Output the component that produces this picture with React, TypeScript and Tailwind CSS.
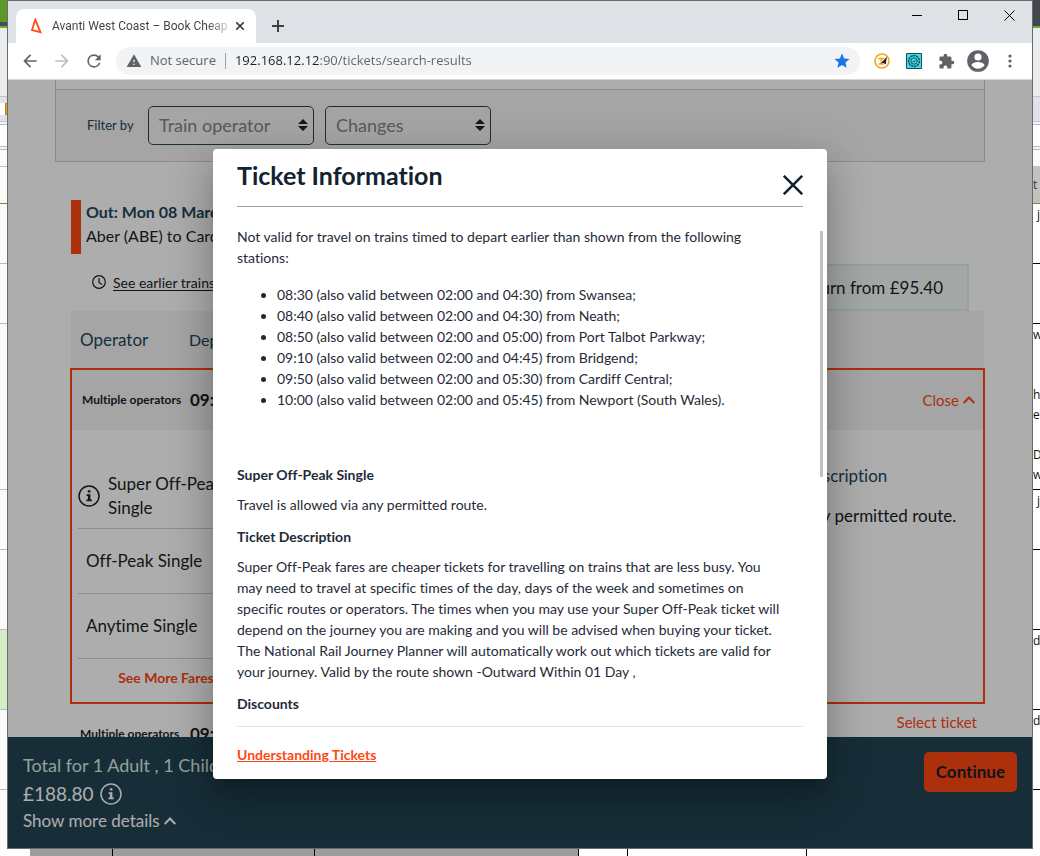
import type { ReactNode } from "react";

type Strip = { size: string; look: string; text?: string };

const leftStrips: Strip[] = [
  { size: "h-[22px]", look: "bg-[#5a9a2b]" },
  { size: "h-[4px]", look: "bg-[#474d55]" },
  { size: "h-[2px]", look: "bg-[#62b32d]" },
  { size: "h-[69px]", look: "bg-[#ebecee] border-b border-[#c3c5cb]" },
  { size: "h-[6px]", look: "bg-[#e0e2e9]" },
  { size: "h-[12px]", look: "bg-[#f0a818] ml-[5px] border border-r-0 border-[#b98014]" },
  { size: "h-[7px]", look: "bg-[#e0e2e9] border-b border-[#c3c5cb]" },
  { size: "h-[3px]", look: "bg-[#f4f4f4] border-b border-[#bcbcbc]" },
  { size: "h-[22px]", look: "bg-white border-b border-[#bcbcbc]" },
  { size: "h-[3px]", look: "bg-[#f4f4f4] border-b border-[#bcbcbc]" },
  { size: "h-[17px]", look: "bg-[#fafafa] border-b border-[#bcbcbc]" },
  { size: "h-[37px]", look: "bg-[#fafafa] border-b border-[#5a9a2b]" },
  { size: "h-[60px]", look: "bg-[#fbfbfb] border-b border-[#bcbcbc]" },
  { size: "h-[60px]", look: "bg-[#fbfbfb] border-b border-[#bcbcbc]" },
  { size: "h-[166px]", look: "bg-[#fbfbfb] border-b border-[#bcbcbc]" },
  { size: "h-[60px]", look: "bg-[#fbfbfb] border-b border-[#bcbcbc]" },
  { size: "h-[80px]", look: "bg-[#fbfbfb] border-b border-[#bcbcbc]" },
  { size: "h-[80px]", look: "bg-[#d6edc4] border-b border-[#bcbcbc]" },
  { size: "h-[80px]", look: "bg-[#fbfbfb] border-b border-[#bcbcbc]" },
  { size: "grow", look: "bg-[#fbfbfb]" },
];

const rightStrips: Strip[] = [
  { size: "h-[26px]", look: "bg-[#41474e]" },
  { size: "h-[2px]", look: "bg-[#62b32d]" },
  { size: "h-[69px]", look: "bg-[#ebecee] border-b border-[#c3c5cb]" },
  { size: "h-[25px]", look: "bg-[#e0e2e9] border-b border-[#c3c5cb]" },
  { size: "h-[3px]", look: "bg-[#f4f4f4] border-b border-[#bcbcbc]" },
  { size: "h-[22px]", look: "bg-white border-b border-[#bcbcbc]" },
  { size: "h-[3px]", look: "bg-[#f4f4f4] border-b border-[#bcbcbc]" },
  { size: "h-[16px]", look: "bg-[#fafafa]" },
  { size: "h-[38px]", look: "bg-[#c2c2c2] border-b border-[#5a9a2b] pt-2 text-[#1b3a4f]", text: "t" },
  { size: "h-[60px]", look: "border-b border-black pl-[4px]", text: "j" },
  { size: "h-[60px]", look: "border-b border-black" },
  { size: "h-[60px]", look: "", text: "w" },
  { size: "h-[20px]", look: "", text: "h" },
  { size: "h-[40px]", look: "", text: "e" },
  { size: "h-[20px]", look: "", text: "D" },
  { size: "h-[26px]", look: "border-b border-black", text: "w" },
  { size: "h-[60px]", look: "border-b border-black pl-[4px]", text: "j" },
  { size: "h-[80px]", look: "border-b border-black" },
  { size: "h-[80px]", look: "border-b border-black", text: "di" },
  { size: "h-[80px]", look: "border-b border-black", text: "di" },
  { size: "grow", look: "" },
];

function EdgeColumn({ strips }: { strips: Strip[] }) {
  return (
    <div className="flex w-[7px] shrink-0 flex-col overflow-hidden bg-white font-['Open_Sans',sans-serif] text-[12px] leading-[22px] text-[#111]">
      {strips.map((s, i) => (
        <div key={i} className={`${s.size} ${s.look} shrink-0 overflow-hidden`}>
          {s.text}
        </div>
      ))}
    </div>
  );
}

function IconButton({ label, children }: { label: string; children: ReactNode }) {
  return (
    <button aria-label={label} className="flex size-8 shrink-0 items-center justify-center text-[#5f6368]">
      {children}
    </button>
  );
}

function WindowButton({ label, children }: { label: string; children: ReactNode }) {
  return (
    <button aria-label={label} className="flex h-7 w-[46px] items-center justify-center">
      <svg width="11" height="11" viewBox="0 0 11 11" fill="none" stroke="#000" shapeRendering="crispEdges">
        {children}
      </svg>
    </button>
  );
}

function BrowserChrome() {
  return (
    <header className="shrink-0 font-['Open_Sans',sans-serif]">
      <div className="flex h-[42px] items-end bg-[#dee1e6] pl-2">
        <div className="flex h-[34px] w-60 items-center rounded-t-lg bg-white pl-3 pr-1">
          <svg width="16" height="16" viewBox="0 0 16 16" className="shrink-0">
            <path d="M7.300 1.600 12.500 14.200 4 12Z" fill="none" stroke="#fb4c1c" strokeWidth="1.800" />
          </svg>
          <div className="ml-2 grow whitespace-nowrap bg-[linear-gradient(90deg,#3c4043_88%,#d0d0d0)] bg-clip-text font-['Roboto',sans-serif] text-[12px] text-transparent">
            Avanti West Coast – Book Cheap
          </div>
          <button aria-label="Close tab" className="flex size-6 shrink-0 items-center justify-center">
            <svg width="8" height="8" viewBox="0 0 8 8" stroke="#3c4043" strokeWidth="1.600">
              <path d="M0 0 8 8M8 0 0 8" />
            </svg>
          </button>
        </div>
        <button aria-label="New tab" className="ml-2 flex h-[34px] w-7 items-center justify-center">
          <svg width="12" height="12" viewBox="0 0 12 12" stroke="#3c4043" strokeWidth="2">
            <path d="M6 0V12M0 6H12" />
          </svg>
        </button>
        <div className="ml-auto flex self-start">
          <WindowButton label="Minimise">
            <path d="M0 5.500H10" />
          </WindowButton>
          <WindowButton label="Maximise">
            <path d="M.5 .5H9.500V9.500H.5Z" />
          </WindowButton>
          <WindowButton label="Close window">
            <path d="M.5 .5 10.500 10.500M10.500 .5 .5 10.500" shapeRendering="auto" />
          </WindowButton>
        </div>
      </div>
      <div className="flex h-[37px] items-center border-b border-[#d6d6d6] bg-white pl-[6px] pr-[6px]">
        <IconButton label="Back">
          <svg width="20" height="20" viewBox="0 0 24 24" fill="currentColor">
            <path d="M20 11H7.800l5.600-5.600L12 4l-8 8 8 8 1.400-1.400L7.800 13H20z" />
          </svg>
        </IconButton>
        <IconButton label="Forward">
          <svg width="20" height="20" viewBox="0 0 24 24" fill="#bdbfc2">
            <path d="M4 11h12.200l-5.600-5.600L12 4l8 8-8 8-1.400-1.400 5.600-5.600H4z" />
          </svg>
        </IconButton>
        <IconButton label="Reload">
          <svg width="20" height="20" viewBox="0 0 24 24" fill="currentColor">
            <path d="M17.650 6.350A7.960 7.960 0 0 0 12 4a8 8 0 1 0 7.730 10h-2.080A6 6 0 1 1 12 6c1.660 0 3.140.690 4.220 1.780L13 11h7V4z" />
          </svg>
        </IconButton>
        <div className="ml-[6px] flex h-7 grow items-center rounded-full bg-[#f1f3f4] pl-[10px] text-[13px] text-[#5f6368]">
          <svg width="16" height="16" viewBox="0 0 24 24" fill="#5f6368" className="shrink-0">
            <path d="M1 21h22L12 2 1 21zm12-3h-2v-2h2v2zm0-4h-2v-4h2v4z" />
          </svg>
          <span className="ml-2 whitespace-nowrap">Not secure</span>
          <span className="ml-[9px] h-4 w-px bg-[#9aa0a6]" />
          <input
            aria-label="Address"
            readOnly
            value="192.168.12.12:90/tickets/search-results"
            className="ml-[9px] w-0 grow bg-[linear-gradient(90deg,#202124_84px,#5f6368_84px)] bg-clip-text text-transparent outline-none"
          />
          <button aria-label="Bookmark" className="mr-2 flex size-5 items-center justify-center">
            <svg width="18" height="18" viewBox="0 0 24 24" fill="#1a73e8">
              <path d="M12 17.300 18.200 21l-1.600-7L22 9.200l-7.200-.6L12 2 9.200 8.600 2 9.200 7.500 14l-1.700 7z" />
            </svg>
          </button>
        </div>
        <div className="ml-[6px] flex">
          <IconButton label="Speed extension">
            <svg width="16" height="16" viewBox="0 0 16 16">
              <circle cx="8" cy="8" r="7" fill="#fff" stroke="#f9a11b" strokeWidth="1.600" />
              <path d="M4 5.500h5L6 8.500M4.500 11h5" fill="none" stroke="#f9a11b" strokeWidth="1.300" />
              <path d="M12.800 3.400 11.800 11.500 9.500 10 6 10.500 9 8Z" fill="#222" />
            </svg>
          </IconButton>
          <IconButton label="Atom extension">
            <svg width="16" height="16" viewBox="0 0 16 16" fill="none" stroke="#164f5c">
              <path d="M.5 .5H15.500V15.500H.5Z" fill="#45dbe6" />
              <circle cx="8" cy="8" r="5.400" strokeWidth="1.500" strokeDasharray="2.400 .6" />
              <circle cx="8" cy="8" r="3.200" />
              <path d="M6.500 8 7.700 9.200 9.800 6.800" />
            </svg>
          </IconButton>
          <IconButton label="Extensions">
            <svg width="17" height="17" viewBox="0 0 24 24" fill="currentColor">
              <path d="M20.500 11H19V7a2 2 0 0 0-2-2h-4V3.500a2.500 2.500 0 0 0-5 0V5H4a2 2 0 0 0-2 2v3.800h1.500a2.700 2.700 0 0 1 0 5.400H2V20a2 2 0 0 0 2 2h3.800v-1.500a2.700 2.700 0 0 1 5.400 0V22H17a2 2 0 0 0 2-2v-4h1.500a2.500 2.500 0 0 0 0-5z" />
            </svg>
          </IconButton>
          <IconButton label="Profile">
            <svg width="26" height="26" viewBox="0 0 24 24" fill="currentColor">
              <path d="M12 2a10 10 0 1 0 0 20 10 10 0 0 0 0-20zm0 3a3.300 3.300 0 1 1 0 6.600A3.300 3.300 0 0 1 12 5zm0 14.200a7.200 7.200 0 0 1-6-3.220c.03-1.990 4-3.080 6-3.080s5.970 1.090 6 3.080a7.200 7.200 0 0 1-6 3.220z" />
            </svg>
          </IconButton>
          <IconButton label="Menu">
            <svg width="4" height="14" viewBox="0 0 4 14" fill="currentColor">
              <circle cx="2" cy="2" r="1.600" />
              <circle cx="2" cy="7" r="1.600" />
              <circle cx="2" cy="12" r="1.600" />
            </svg>
          </IconButton>
        </div>
      </div>
    </header>
  );
}

function FilterSelect({ label }: { label: string }) {
  return (
    <div className="relative">
      <select
        aria-label={label}
        className="h-[39px] w-[166px] appearance-none rounded-[5px] border border-[#22465a] bg-transparent pl-[10px] text-[18px] text-[#7c868f]"
      >
        <option>{label}</option>
      </select>
      <svg width="10" height="12" viewBox="0 0 10 12" fill="#222" className="pointer-events-none absolute right-[6px] top-[13px]">
        <path d="M5 0 10 5H0ZM0 7H10L5 12Z" />
      </svg>
    </div>
  );
}

function InfoIcon({ size }: { size: number }) {
  return (
    <svg width={size} height={size} viewBox="0 0 22 22" className="shrink-0">
      <circle cx="11" cy="11" r="10" fill="none" stroke="currentColor" strokeWidth="1.500" />
      <path d="M9.800 5.200h2.600v2.400H9.800zM8.600 9.200h3.800v5.400h1.400v1.700H8.400v-1.700h1.500v-3.700H8.600z" fill="currentColor" />
    </svg>
  );
}

function Chevron() {
  return (
    <svg width="12" height="8" viewBox="0 0 12 8" fill="none" stroke="currentColor" strokeWidth="2">
      <path d="M.700 7 6 1.500 11.300 7" />
    </svg>
  );
}

function Fare({ name, info }: { name: string; info?: boolean }) {
  return (
    <li
      className={
        info
          ? "flex h-[65px] items-center gap-2 border-b border-[#d0d0d0] leading-6"
          : "flex h-[65px] items-center border-b border-[#d0d0d0] pl-2 leading-6"
      }
    >
      {info && <InfoIcon size={22} />}
      <span>{name}</span>
    </li>
  );
}

function Results() {
  return (
    <table className="w-full table-fixed border-collapse text-left">
      <thead>
        <tr className="h-[58px] bg-[#f4f4f4] text-[#22465a]">
          <th className="w-[118px] pl-[9px] text-[17px] font-normal">Operator</th>
          <th className="text-[16px] font-normal">Departs</th>
          <th className="w-[140px]" />
        </tr>
      </thead>
      <tbody className="border-2 border-[#fe4713]">
        <tr className="h-[61px] bg-[#f4f4f4]">
          <td className="whitespace-nowrap pl-[10px] text-[12px] font-bold">Multiple operators</td>
          <td className="pl-px text-[17px] font-bold">09:30</td>
          <td className="pr-[8px] text-right">
            <button className="inline-flex items-center gap-1 text-[15px] text-[#fe4713]">
              Close <Chevron />
            </button>
          </td>
        </tr>
        <tr>
          <td colSpan={3} className="h-[273px] p-0 align-top">
            <div className="flex justify-between pl-[6px] text-[17px]">
              <div className="w-[180px] pt-[34px]">
                <ul>
                  <Fare name="Super Off-Peak Single" info />
                  <Fare name="Off-Peak Single" />
                  <Fare name="Anytime Single" />
                </ul>
                <button className="block h-9 w-full whitespace-nowrap pr-1 text-center text-[14px] font-bold text-[#fe4713]">
                  See More Fares
                </button>
              </div>
              <dl className="w-[182px] pt-[34px] text-[16px] leading-6">
                <dt className="text-[17px] text-[#22465a]">Description</dt>
                <dd className="mt-4 whitespace-nowrap text-[17px]">Any permitted route.</dd>
              </dl>
            </div>
          </td>
        </tr>
      </tbody>
      <tbody>
        <tr className="h-[60px]">
          <td className="whitespace-nowrap pl-[9px] text-[12px] font-bold">Multiple operators</td>
          <td className="pl-px text-[17px] font-bold">09:45</td>
          <td className="pr-[7px] pt-[6px] text-right align-top">
            <button className="text-[15px] text-[#fe4713]">Select ticket</button>
          </td>
        </tr>
      </tbody>
    </table>
  );
}

const validity = [
  "08:30 (also valid between 02:00 and 04:30) from Swansea;",
  "08:40 (also valid between 02:00 and 04:30) from Neath;",
  "08:50 (also valid between 02:00 and 05:00) from Port Talbot Parkway;",
  "09:10 (also valid between 02:00 and 04:45) from Bridgend;",
  "09:50 (also valid between 02:00 and 05:30) from Cardiff Central;",
  "10:00 (also valid between 02:00 and 05:45) from Newport (South Wales).",
];

function TicketDialog() {
  return (
    <div
      role="dialog"
      aria-labelledby="ticket-title"
      className="flex max-h-full w-[614px] max-w-full flex-col rounded bg-white px-6 text-[14px] leading-[21px] text-[#1f2b38] shadow-[0_11px_15px_-7px_rgba(0,0,0,0.2),0_24px_38px_3px_rgba(0,0,0,0.14),0_9px_46px_8px_rgba(0,0,0,0.12)]"
    >
      <div className="flex h-[58px] items-start justify-between border-b border-[#97a3b0] pt-[10px]">
        <h1 id="ticket-title" className="text-[25px] font-bold leading-8 text-[#12222f]">
          Ticket Information
        </h1>
        <button aria-label="Close" className="mt-[16px]">
          <svg width="20" height="20" viewBox="0 0 20 20" stroke="#12202c" strokeWidth="2.500">
            <path d="M.800 .800 19.200 19.200M19.200 .800 .800 19.200" />
          </svg>
        </button>
      </div>
      <div className="relative pb-[14px] pt-[19px]">
        <div className="absolute -right-5 top-6 h-[246px] w-[3px] bg-[#c1c1c1]" />
        <p>
          Not valid for travel on trains timed to depart earlier than shown from the following
          <br />
          stations:
        </p>
        <ul className="mt-4 list-disc pl-10">
          {validity.map((v) => (
            <li key={v}>{v}</li>
          ))}
        </ul>
        <h2 className="mt-[54px] font-bold">Super Off-Peak Single</h2>
        <p className="mt-[9px]">Travel is allowed via any permitted route.</p>
        <h2 className="mt-[11px] font-bold">Ticket Description</h2>
        <p className="mt-[9px] whitespace-nowrap">
          Super Off-Peak fares are cheaper tickets for travelling on trains that are less busy. You
          <br />
          may need to travel at specific times of the day, days of the week and sometimes on
          <br />
          specific routes or operators. The times when you may use your Super Off-Peak ticket will
          <br />
          depend on the journey you are making and you will be advised when buying your ticket.
          <br />
          The National Rail Journey Planner will automatically work out which tickets are valid for
          <br />
          your journey. Valid by the route shown -Outward Within 01 Day ,
        </p>
        <h2 className="mt-[11px] font-bold">Discounts</h2>
        <hr className="mb-[17px] mt-3 border-[#e2e4e6]" />
        <a href="#understanding-tickets" className="font-bold text-[#fe4713] underline">
          Understanding Tickets
        </a>
      </div>
    </div>
  );
}

export default function App() {
  return (
    <div className="flex h-screen flex-col overflow-hidden bg-white font-['Lato',sans-serif] [font-variant-ligatures:none]">
      <div className="flex min-h-0 grow">
        <EdgeColumn strips={leftStrips} />
        <div className="flex min-w-0 grow flex-col border border-[#6b6b6b] bg-white">
          <BrowserChrome />
          <div className="relative flex min-h-0 grow flex-col text-[#1a1f24]">
            <main className="min-h-0 grow overflow-hidden pl-[47px] pr-[47px]">
              <section className="border-x border-b border-[#cfcfcf]">
                <div className="h-[10px] border-b border-[#cfcfcf]" />
                <div className="flex h-[71px] items-center bg-[#f4f4f4] pl-[31px]">
                  <span className="w-[61px] whitespace-nowrap text-[13px] text-[#22465a]">Filter by</span>
                  <div className="flex gap-[11px]">
                    <FilterSelect label="Train operator" />
                    <FilterSelect label="Changes" />
                  </div>
                </div>
              </section>
              <div className="pl-[15px]">
                <div className="mt-[38px] flex h-[54px] gap-[5px]">
                  <div className="ml-px w-[10px] bg-[#fe4713]" />
                  <div className="text-[16px] leading-6">
                    <h2 className="font-bold text-[#22465a]">Out: Mon 08 March</h2>
                    <p>Aber (ABE) to Cardiff</p>
                  </div>
                </div>
                <div className="mt-[10px] flex h-[47px] justify-between pl-[22px] pr-4">
                  <a href="#earlier" className="flex h-9 items-center gap-[7px] text-[14px]">
                    <svg width="14" height="14" viewBox="0 0 14 14" fill="none" stroke="currentColor" strokeWidth="1.200">
                      <circle cx="7" cy="7" r="6.300" />
                      <path d="M7 3V7.500L10 9.500" />
                    </svg>
                    <span className="underline underline-offset-2">See earlier trains</span>
                  </a>
                  <div className="flex items-center border-2 border-[#dcefe6] bg-[#f1f8f6] px-6 text-[17px]">Return from £95.40</div>
                </div>
                <Results />
              </div>
            </main>
            <footer className="flex h-[111px] shrink-0 items-start justify-between bg-[#234454] pl-[15px] pr-[15px] pt-[15px] text-white">
              <div>
                <p className="text-[18px] leading-[26px] text-[#dcebe0]">Total for 1 Adult , 1 Child</p>
                <p className="flex h-8 items-center gap-[6px] text-[19px]">
                  £188.80 <InfoIcon size={22} />
                </p>
                <button className="flex h-[22px] items-center gap-1 text-[17px]">
                  Show more details <Chevron />
                </button>
              </div>
              <button className="h-10 rounded-[5px] bg-[#fe4713] px-3 text-[17px] font-bold text-[#1a1f24]">Continue</button>
            </footer>
            <div className="absolute inset-0 flex items-center justify-center overflow-hidden bg-black/32">
              <TicketDialog />
            </div>
          </div>
        </div>
        <EdgeColumn strips={rightStrips} />
      </div>
      <div className="flex h-[7px] shrink-0 bg-white">
        <div className="ml-[30px] w-[83px] border-r border-black bg-[#9d9d9d]" />
        <div className="w-[202px] border-r border-black bg-[#9d9d9d]" />
        <div className="w-[264px] border-r border-black bg-[#9d9d9d]" />
        <div className="w-[49px] border-r border-black" />
        <div className="w-[179px] border-r border-black" />
      </div>
    </div>
  );
}
